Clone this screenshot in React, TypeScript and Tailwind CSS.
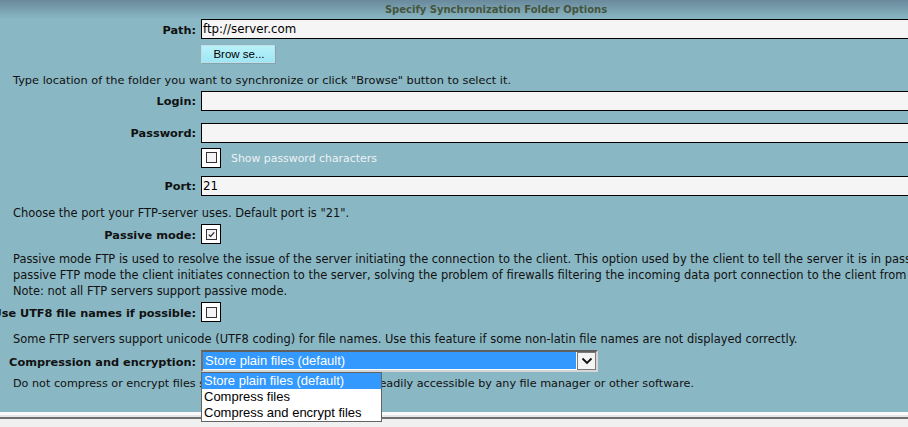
import type { ReactNode } from "react";

const Field = ({ value }: { value?: string }) => (
  <div className="flex h-[20px] w-[790px] items-center border border-black bg-[#f5f5f5] pl-[1px] pt-[2px] font-['DejaVu_Sans',sans-serif] text-[11.8px] text-black">
    {value}
  </div>
);

const Check = ({ checked }: { checked?: boolean }) => (
  <div className="flex h-[20px] w-[20px] items-center justify-center border border-black bg-white">
    <div className="flex h-[11px] w-[11px] items-center justify-center border border-[#333] bg-[#f4f4f4]">
      {checked && (
        <svg width="9" height="9" viewBox="0 0 9 9">
          <path d="M1.8 4.6 L3.6 6.4 L7.2 2.4" fill="none" stroke="#222" strokeWidth="1.2" />
        </svg>
      )}
    </div>
  </div>
);

const Row = ({ label, className, children }: { label?: string; className: string; children?: ReactNode }) => (
  <div className={className}>
    <div className="flex w-[196px] shrink-0 justify-end whitespace-nowrap pt-[3px] text-[11.3px] font-bold leading-[16px] text-[#111]">
      {label}
    </div>
    <div className="ml-[5px] flex items-center">{children}</div>
  </div>
);

const Note = ({ className, children }: { className: string; children: ReactNode }) => (
  <div className={className}>{children}</div>
);

export default function App() {
  return (
    <div className="relative h-[427px] w-[908px] overflow-hidden bg-[#f0f0f0]">
      <div className="w-[992px] bg-[#89b7c4] font-['DejaVu_Sans',sans-serif] text-[11.45px] text-[#111]">
        {/* panel title */}
        <div className="flex h-[19px] items-center justify-center bg-gradient-to-b from-[#6a8a9c] to-[#89b7c4] pb-[1px] text-[10px] font-bold text-[#44553c]">
          Specify Synchronization Folder Options
        </div>

        <Row label="Path:" className="flex h-[20px] items-center">
          <Field value="ftp://server.com" />
        </Row>
        <Row className="flex h-[30px] items-center">
          <button className="h-[18px] w-[74px] border border-[#c3dde4] bg-gradient-to-b from-[#b9f2fb] to-[#9ee6f4] pl-[2px] font-['Liberation_Sans',sans-serif] text-[11.5px] text-black shadow-[1px_1px_0_#7fa6b1]">
            Brow se...
          </button>
        </Row>
        <Note className="flex h-[20px] items-center whitespace-nowrap pl-[13px] pt-[3px] text-[11.35px]">
          Type location of the folder you want to synchronize or click "Browse" button to select it.
        </Note>

        <Row label="Login:" className="flex h-[23px] items-center">
          <Field />
        </Row>
        <Row label="Password:" className="mt-[9px] flex h-[23px] items-center">
          <Field />
        </Row>
        <Row className="flex h-[27px] items-center">
          <Check />
          <span className="ml-[10px] pt-[3px] text-[10.9px] text-[#edf3f5]">Show password characters</span>
        </Row>
        <Row label="Port:" className="flex h-[29px] items-center">
          <Field value="21" />
        </Row>
        <Note className="flex h-[24px] items-center whitespace-nowrap pl-[13px] pt-[3px]">
          Choose the port your FTP-server uses. Default port is "21".
        </Note>

        <Row label="Passive mode:" className="flex h-[20px] items-center">
          <Check checked />
        </Row>
        <Note className="mt-[7px] whitespace-nowrap pl-[13px] leading-[16px]">
          Passive mode FTP is used to resolve the issue of the server initiating the connection to the client. This option used by the client to tell the server it is in passive mode. In
          <br />
          passive FTP mode the client initiates connection to the server, solving the problem of firewalls filtering the incoming data port connection to the client from the server.
          <br />
          Note: not all FTP servers support passive mode.
        </Note>

        <Row label="Use UTF8 file names if possible:" className="mt-[3px] flex h-[20px] items-center">
          <Check />
        </Row>
        <Note className="mt-[8px] flex h-[16px] items-center whitespace-nowrap pl-[13px] pt-[3px]">
          Some FTP servers support unicode (UTF8 coding) for file names. Use this feature if some non-latin file names are not displayed correctly.
        </Note>

        <Row label="Compression and encryption:" className="relative z-10 mt-[4px] flex h-[22px] items-center">
          <div className="relative">
            <div className="flex h-[22px] w-[397px] border-2 border-t-[#5f5f5f] border-l-[#6f6f6f] border-r-[#d6d6d6] border-b-[#d6d6d6]">
              <div className="flex flex-1 items-center border-r border-b border-white bg-[#3399ff] pl-[2px] font-['Liberation_Sans',sans-serif] text-[13px] text-white">
                Store plain files (default)
              </div>
              <div className="flex w-[19px] items-center justify-center border border-[#7a7a7a] bg-[#f4f4f4]">
                <svg width="12" height="8" viewBox="0 0 12 8">
                  <path d="M1.5 1.5 L6 6 L10.5 1.5" fill="none" stroke="#111" strokeWidth="1.8" />
                </svg>
              </div>
            </div>
            {/* open option list */}
            <div className="absolute left-0 top-full w-[181px] border border-[#646464] bg-white font-['Liberation_Sans',sans-serif] text-[13px] text-black">
              <div className="flex h-[16px] items-center bg-[#3399ff] pl-[2px] text-white">Store plain files (default)</div>
              <div className="flex h-[16px] items-center pl-[2px]">Compress files</div>
              <div className="flex h-[16px] items-center pl-[2px]">Compress and encrypt files</div>
            </div>
          </div>
        </Row>
        <Note className="mt-[3px] flex h-[16px] items-center whitespace-nowrap pl-[13px] pt-[3px] text-[11.2px]">
          Do not compress or encrypt files so that they stay intact and be readily accessible by any file manager or other software.
        </Note>
        <div className="h-[21px]" />
      </div>

      {/* footer separator */}
      <div className="h-[3px] bg-[#fafafa]" />
      <div className="h-[2px] bg-[#e6e6e6]" />
      <div className="h-[2px] bg-[#707070]" />
    </div>
  );
}
